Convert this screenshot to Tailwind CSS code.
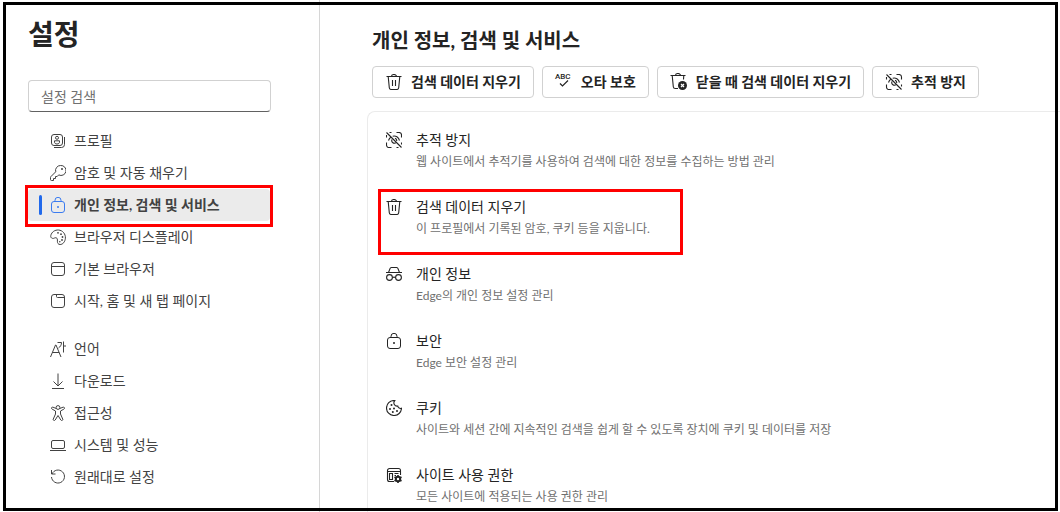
<!DOCTYPE html>
<html lang="ko">
<head>
<meta charset="utf-8">
<meta name="viewport" content="width=device-width, initial-scale=1">
<title>설정</title>
<script src="https://cdn.jsdelivr.net/npm/@tailwindcss/browser@4"></script>
</head>
<body class="bg-white font-['Lato','Noto_Sans_CJK_KR',sans-serif] text-sm text-[#242424]">

<svg class="hidden" aria-hidden="true">
  <symbol id="profile" viewBox="0 0 16 16"><g fill="none" stroke="currentColor"><rect x="1.5" y="1.5" width="11" height="11" rx="2.5"/><path d="M14.5 4v7.5a3 3 0 0 1-3 3H4"/><circle cx="7" cy="4.8" r="1.5"/><path d="M4.5 7.8h5v1.4c0 1-1 1.8-2.5 1.8s-2.500-.8-2.500-1.800z"/></g></symbol>
  <symbol id="key" viewBox="0 0 16 16"><g fill="none" stroke="currentColor"><path d="M10.500.5a5 5 0 0 0-4.800 6.300L.8 11.700a1 1 0 0 0-.3.700v2.100a1 1 0 0 0 1 1h2v-2h2v-2h1.700l1.500-1.600A5 5 0 1 0 10.500.5z" stroke-linejoin="round"/></g><circle cx="12" cy="4" r="1" fill="currentColor"/></symbol>
  <symbol id="lock" viewBox="0 0 16 16"><g fill="none" stroke="currentColor"><rect x="1.500" y="4.500" width="13" height="11" rx="2.500"/><path d="M5 4.500V3.300a3 3 0 0 1 6 0v1.200"/></g><circle cx="8" cy="10" r="1" fill="currentColor"/></symbol>
  <symbol id="palette" viewBox="0 0 16 16"><path d="M.8 6.500C1.700 2.800 5 .8 8.500 1c4.200.3 7.200 4 6.900 8.200-.3 3.700-2.600 6.300-5.300 6.300-2 0-2.800-1.600-2.700-3.300.1-1.800 0-3-1.200-3.400-1.500-.5-2.200 1-3.600.6C.9 9 .500 7.800.8 6.500z" fill="none" stroke="currentColor"/><g fill="currentColor"><circle cx="8" cy="3.800" r=".9"/><circle cx="11" cy="5.200" r=".9"/><circle cx="12.500" cy="8" r=".9"/><circle cx="12" cy="11" r=".9"/><circle cx="9.800" cy="12.800" r=".8"/></g></symbol>
  <symbol id="window" viewBox="0 0 16 16"><g fill="none" stroke="currentColor"><rect x="1.500" y="1.500" width="13" height="13" rx="2.500"/><path d="M1.500 5.500h13"/></g></symbol>
  <symbol id="tab" viewBox="0 0 16 16"><g fill="none" stroke="currentColor"><rect x="1.500" y="1.500" width="13" height="13" rx="2.500"/><path d="M6.500 1.500v2a1 1 0 0 0 1 1h7"/></g></symbol>
  <symbol id="language" viewBox="0 0 16 16"><path d="M.5 16 5.500 4h.5l5 12M2.300 11.500h6.900M7.500 1.500h4c0 2.500-1.200 4.300-3 5.500M13.500.5v11M13.500 5H16" fill="none" stroke="currentColor"/></symbol>
  <symbol id="download" viewBox="0 0 16 16"><path d="M8 .5v12M3.500 8.500 8 13l4.500-4.500M2 15.500h12" fill="none" stroke="currentColor"/></symbol>
  <symbol id="access" viewBox="0 0 16 16"><g fill="none" stroke="currentColor" stroke-linejoin="round"><circle cx="8" cy="2.500" r="1.900"/><path d="M6.200 3.500 3 2.200a1 1 0 0 0-.9 1.900L5.500 6v3l-2.200 5a1 1 0 0 0 1.900 1L8 10.500l2.800 4.500a1 1 0 0 0 1.900-1l-2.200-5V6l3.400-1.900a1 1 0 0 0-.9-1.900L9.800 3.500"/></g></symbol>
  <symbol id="laptop" viewBox="0 0 16 16"><g fill="none" stroke="currentColor"><rect x="1.500" y="3.500" width="13" height="8" rx="1.500"/><path d="M0 13.500h16"/></g></symbol>
  <symbol id="reset" viewBox="0 0 16 16"><path d="M1.500 1v4h4M2 5a6.500 6.500 0 1 1-.5 3" fill="none" stroke="currentColor"/></symbol>
  <symbol id="trash" viewBox="0 0 16 16"><path d="M.5 2.500h15M5.500 2.500a2.500 2 0 0 1 5 0M2.200 2.500l1.100 11.200a2 2 0 0 0 2 1.800h5.400a2 2 0 0 0 2-1.800l1.100-11.200M6.500 6v6M9.500 6v6" fill="none" stroke="currentColor" stroke-width="1.100"/></symbol>
  <symbol id="track" viewBox="0 0 16 16"><g fill="none" stroke="currentColor" stroke-width="1.100"><path d="M3.500.5h2M10.500.5H13a2.500 2.500 0 0 1 2.500 2.500v2.500M15.500 10.500v2M5.500 15.500H3A2.500 2.500 0 0 1 .5 13v-2.500M.5 5.500V3M10.500 15.500h2M.5.5l15 15M2.500 8.500c.5-1.600 1.500-2.800 2.700-3.500M6.700 4.200c3-.8 6 .9 6.800 4.300M9 6.200a2.600 2.600 0 0 1 1.700 2.800M6 7.500a2.600 2.600 0 0 0 3.700 3.300"/></g></symbol>
  <symbol id="incognito" viewBox="0 0 16 16"><g fill="none" stroke="currentColor" stroke-width="1.100"><path d="M0 6.500h16M2.500 6.500 4 2.600a1.500 1.500 0 0 1 1.400-1.100h5.200A1.500 1.500 0 0 1 12 2.600l1.500 3.900M6.500 11.500a2 1 0 0 1 3 0"/><circle cx="3.500" cy="11.500" r="2.900"/><circle cx="12.500" cy="11.500" r="2.900"/></g></symbol>
  <symbol id="cookie" viewBox="0 0 16 16"><path d="M8 .5a7.500 7.500 0 1 0 7.500 7.800 2.800 2.800 0 0 1-3.700-2.200A3.300 3.300 0 0 1 8.800.6z" fill="none" stroke="currentColor" stroke-width="1.100"/><g fill="currentColor"><circle cx="5.500" cy="5" r="1"/><circle cx="4" cy="9" r="1"/><circle cx="8" cy="8.500" r="1"/><circle cx="6.800" cy="12" r="1"/><circle cx="11" cy="11" r="1"/></g></symbol>
  <symbol id="perms" viewBox="0 0 16 16"><path d="M8 14.500H3.500a2 2 0 0 1-2-2v-9a2 2 0 0 1 2-2h9a2 2 0 0 1 2 2V8M1.500 4.500h13M3.500 6.500h3v6h-3zM8.500 6.500h4M8.500 8.500H10" fill="none" stroke="currentColor" stroke-width="1.100"/><circle cx="12" cy="12" r="2.200" fill="none" stroke="currentColor" stroke-width="2"/><path d="M12 8v1.500M12 14.500V16M8.500 10l1.300.8M14.200 13.200l1.300.8M8.500 14l1.300-.8M14.200 10.800l1.300-.8" stroke="currentColor" stroke-width="1.600"/></symbol>
</svg>

<div class="relative flex h-screen overflow-hidden">

  <aside class="w-80 shrink-0 border-r border-[#d6d6d6] pl-7 pt-3">
    <h1 class="text-[28px] leading-11 font-bold">설정</h1>
    <input type="search" aria-label="설정 검색" placeholder="설정 검색" class="mt-6 block h-8 w-[243px] rounded border border-[#d1d1d1] border-b-[#616161] bg-white px-3 text-sm placeholder:text-[#707070]">

    <nav class="mt-[13px] w-[242px] text-[#424242]" aria-label="설정">
      <a href="#" class="flex h-8 items-center gap-2 pl-[22px]"><svg class="size-4"><use href="#profile"/></svg>프로필</a>
      <a href="#" class="flex h-8 items-center gap-2 pl-[22px]"><svg class="size-4"><use href="#key"/></svg>암호 및 자동 채우기</a>
      <a href="#" aria-current="page" class="relative flex h-8 items-center rounded bg-[#ebebeb] pl-[11px] font-bold">
        <span class="h-5 w-[3px] rounded-full bg-[#2169eb]"></span>
        <svg class="mr-2 ml-2 size-4 text-[#3b7cf0]"><use href="#lock"/></svg>개인 정보, 검색 및 서비스
        <span class="pointer-events-none absolute -inset-x-[3px] -top-1 -bottom-[6px] z-10 border-3 border-[#ff0000]"></span>
      </a>
      <a href="#" class="flex h-8 items-center gap-2 pl-[22px]"><svg class="size-4"><use href="#palette"/></svg>브라우저 디스플레이</a>
      <a href="#" class="flex h-8 items-center gap-2 pl-[22px]"><svg class="size-4"><use href="#window"/></svg>기본 브라우저</a>
      <a href="#" class="flex h-8 items-center gap-2 pl-[22px]"><svg class="size-4"><use href="#tab"/></svg>시작, 홈 및 새 탭 페이지</a>
      <a href="#" class="mt-4 flex h-8 items-center gap-2 pl-[22px]"><svg class="size-4"><use href="#language"/></svg>언어</a>
      <a href="#" class="flex h-8 items-center gap-2 pl-[22px]"><svg class="size-4"><use href="#download"/></svg>다운로드</a>
      <a href="#" class="flex h-8 items-center gap-2 pl-[22px]"><svg class="size-4"><use href="#access"/></svg>접근성</a>
      <a href="#" class="flex h-8 items-center gap-2 pl-[22px]"><svg class="size-4"><use href="#laptop"/></svg>시스템 및 성능</a>
      <a href="#" class="flex h-8 items-center gap-2 pl-[22px]"><svg class="size-4"><use href="#reset"/></svg>원래대로 설정</a>
    </nav>
  </aside>

  <main class="flex min-w-0 grow flex-col pt-6 pl-[47px]">
    <h2 class="pl-[5px] text-xl leading-8 font-bold">개인 정보, 검색 및 서비스</h2>
    <div class="mt-[10px] flex gap-2 pl-[5px] font-bold whitespace-nowrap">
      <button type="button" class="flex h-8 items-center gap-2 rounded border border-[#d1d1d1] px-3"><svg class="h-4 w-[18px]"><use href="#trash"/></svg>검색 데이터 지우기</button>
      <button type="button" class="flex h-8 items-center gap-2 rounded border border-[#d1d1d1] px-3"><svg class="h-5 w-[18px] overflow-visible" viewBox="0 0 18 20" aria-hidden="true"><text x="0" y="7" font-family="Roboto" font-size="8" font-weight="500" fill="currentColor">ABC</text><path d="m5 11.500 2.500 2.500 5.500-5.500" fill="none" stroke="currentColor" stroke-width="1.200"/></svg>오타 보호</button>
      <button type="button" class="flex h-8 items-center gap-2 rounded border border-[#d1d1d1] px-3"><svg class="h-[18px] w-[18px]" viewBox="0 0 18 18" aria-hidden="true"><path d="M.5 2.500h15M5.500 2.500a2.500 2 0 0 1 5 0M2.200 2.500l1.100 11.200a2 2 0 0 0 2 1.800H8M13.800 2.500l-.3 4" fill="none" stroke="currentColor" stroke-width="1.100"/><circle cx="12.500" cy="12.500" r="4.500" fill="currentColor"/><path d="m11 11 3 3m0-3-3 3" stroke="#fff" stroke-width="1.200"/></svg>닫을 때 검색 데이터 지우기</button>
      <button type="button" class="flex h-8 items-center gap-2 rounded border border-[#d1d1d1] px-3"><svg class="h-4 w-[18px]"><use href="#track"/></svg>추적 방지</button>
    </div>

    <ul class="mt-[13px] grow rounded-tl-lg border-t border-l border-[#ebebeb] pt-[18px] pl-[18px]">
      <li class="h-[67px]"><a href="#" class="flex gap-[14px]"><svg class="mt-[2px] size-4 shrink-0"><use href="#track"/></svg><span><span class="block leading-5">추적 방지</span><span class="mt-[2px] block text-xs leading-5 text-[#707070]">웹 사이트에서 추적기를 사용하여 검색에 대한 정보를 수집하는 방법 관리</span></span></a></li>
      <li class="relative h-[67px]"><a href="#" class="flex gap-[14px]"><svg class="mt-[2px] size-4 shrink-0"><use href="#trash"/></svg><span><span class="block leading-5">검색 데이터 지우기</span><span class="mt-[2px] block text-xs leading-5 text-[#707070]">이 프로필에서 기록된 암호, 쿠키 등을 지웁니다.</span></span></a>
        <span class="pointer-events-none absolute -top-2 -left-2 h-[66px] w-[305px] border-3 border-[#ff0000]"></span></li>
      <li class="h-[67px]"><a href="#" class="flex gap-[14px]"><svg class="mt-[2px] size-4 shrink-0"><use href="#incognito"/></svg><span><span class="block leading-5">개인 정보</span><span class="mt-[2px] block text-xs leading-5 text-[#707070]">Edge의 개인 정보 설정 관리</span></span></a></li>
      <li class="h-[67px]"><a href="#" class="flex gap-[14px]"><svg class="mt-[2px] size-4 shrink-0"><use href="#lock"/></svg><span><span class="block leading-5">보안</span><span class="mt-[2px] block text-xs leading-5 text-[#707070]">Edge 보안 설정 관리</span></span></a></li>
      <li class="h-[67px]"><a href="#" class="flex gap-[14px]"><svg class="mt-[2px] size-4 shrink-0"><use href="#cookie"/></svg><span><span class="block leading-5">쿠키</span><span class="mt-[2px] block text-xs leading-5 text-[#707070]">사이트와 세션 간에 지속적인 검색을 쉽게 할 수 있도록 장치에 쿠키 및 데이터를 저장</span></span></a></li>
      <li><a href="#" class="flex gap-[14px]"><svg class="mt-[2px] size-4 shrink-0"><use href="#perms"/></svg><span><span class="block leading-5">사이트 사용 권한</span><span class="mt-[2px] block text-xs leading-5 text-[#707070]">모든 사이트에 적용되는 사용 권한 관리</span></span></a></li>
    </ul>
  </main>

  <div class="pointer-events-none absolute top-[2px] right-[2px] bottom-px left-[3px] border-3 border-black"></div>
</div>
</body>
</html>
